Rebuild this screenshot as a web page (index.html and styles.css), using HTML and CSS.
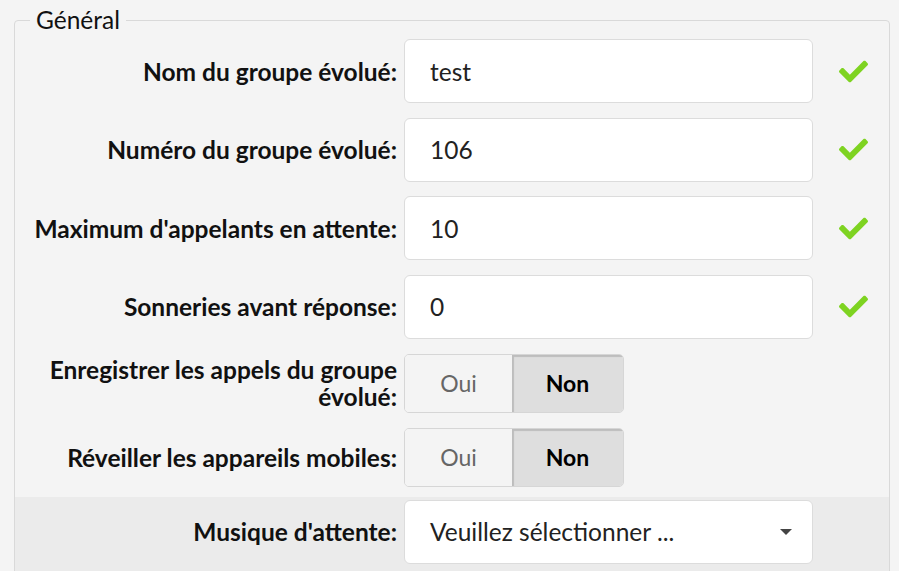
FILE: index.html
```html
<!DOCTYPE html>
<html lang="fr">
<head>
  <meta charset="UTF-8">
  <meta name="viewport" content="width=device-width, initial-scale=1.0">
  <title>Groupe évolué</title>
  <link rel="stylesheet" href="styles.css">
</head>
<body>
  <!-- Paramètres généraux du groupe -->
  <fieldset class="panel">
    <legend>Général</legend>

    <div class="row">
      <label class="row-label" for="nom">Nom du groupe évolué:</label>
      <input class="field" id="nom" type="text" value="test">
      <span class="ok">
        <svg viewBox="0 0 512 512"><path d="M173.9 439.4l-166.4-166.4c-10-10-10-26.2 0-36.2l36.2-36.2c10-10 26.2-10 36.2 0L192 312.7 432.1 72.6c10-10 26.2-10 36.2 0l36.2 36.2c10 10 10 26.2 0 36.2l-294.4 294.4c-10 10-26.2 10-36.2 0z"/></svg>
      </span>
    </div>

    <div class="row">
      <label class="row-label" for="numero">Numéro du groupe évolué:</label>
      <input class="field" id="numero" type="text" value="106">
      <span class="ok">
        <svg viewBox="0 0 512 512"><path d="M173.9 439.4l-166.4-166.4c-10-10-10-26.2 0-36.2l36.2-36.2c10-10 26.2-10 36.2 0L192 312.7 432.1 72.6c10-10 26.2-10 36.2 0l36.2 36.2c10 10 10 26.2 0 36.2l-294.4 294.4c-10 10-26.2 10-36.2 0z"/></svg>
      </span>
    </div>

    <div class="row">
      <label class="row-label" for="max">Maximum d'appelants en attente:</label>
      <input class="field" id="max" type="text" value="10">
      <span class="ok">
        <svg viewBox="0 0 512 512"><path d="M173.9 439.4l-166.4-166.4c-10-10-10-26.2 0-36.2l36.2-36.2c10-10 26.2-10 36.2 0L192 312.7 432.1 72.6c10-10 26.2-10 36.2 0l36.2 36.2c10 10 10 26.2 0 36.2l-294.4 294.4c-10 10-26.2 10-36.2 0z"/></svg>
      </span>
    </div>

    <div class="row">
      <label class="row-label" for="sonneries">Sonneries avant réponse:</label>
      <input class="field" id="sonneries" type="text" value="0">
      <span class="ok">
        <svg viewBox="0 0 512 512"><path d="M173.9 439.4l-166.4-166.4c-10-10-10-26.2 0-36.2l36.2-36.2c10-10 26.2-10 36.2 0L192 312.7 432.1 72.6c10-10 26.2-10 36.2 0l36.2 36.2c10 10 10 26.2 0 36.2l-294.4 294.4c-10 10-26.2 10-36.2 0z"/></svg>
      </span>
    </div>

    <div class="row row-toggle">
      <span class="row-label">Enregistrer les appels du groupe évolué:</span>
      <div class="toggle">
        <button class="toggle-btn">Oui</button>
        <button class="toggle-btn active">Non</button>
      </div>
    </div>

    <div class="row row-toggle">
      <span class="row-label">Réveiller les appareils mobiles:</span>
      <div class="toggle">
        <button class="toggle-btn">Oui</button>
        <button class="toggle-btn active">Non</button>
      </div>
    </div>

    <!-- Ligne surlignée -->
    <div class="row row-hover">
      <label class="row-label" for="musique">Musique d'attente:</label>
      <div class="field select" id="musique">
        <span>Veuillez sélectionner ...</span>
        <span class="caret"></span>
      </div>
    </div>
  </fieldset>
</body>
</html>
```

FILE: styles.css
```css
body {
  margin: 0;
  padding: 6px 9px 0 14px;
  background-color: #f4f4f4;
  font-family: Lato, "Open Sans", sans-serif;
  color: #111;
  overflow: hidden;
  height: 571px;
  box-sizing: border-box;
}

.panel {
  margin: 0;
  padding: 5px 0 20px 0;
  border: 1px solid #d9d9d9;
  border-radius: 4px;
  min-height: 600px;
}

.panel legend {
  margin-left: 15px;
  padding: 0 6px;
  font-size: 24.5px;
  line-height: 28px;
  color: #111;
}

.row {
  display: flex;
  align-items: center;
  padding-bottom: 14.67px;
}

.row-label {
  width: 374px;
  padding-left: 8px;
  margin-right: 7px;
  text-align: right;
  font-weight: bold;
  font-size: 24.5px;
  line-height: 27px;
}

.field {
  box-sizing: border-box;
  width: 409px;
  height: 64px;
  padding: 0 25px;
  border: 1px solid #dcdcdc;
  border-radius: 6px;
  background: #fff;
  font-family: inherit;
  font-size: 24.5px;
  color: #222;
  outline: none;
}

.ok {
  margin-left: 26px;
  width: 29px;
  height: 29px;
  display: flex;
  align-items: center;
}

.ok svg {
  width: 29px;
  height: 29px;
  fill: #7ed321;
}

/* Boutons Oui / Non */
.row-toggle {
  padding-bottom: 15px;
}

.toggle {
  display: flex;
  height: 59px;
  border: 1px solid #d6d6d6;
  border-radius: 5px;
  overflow: hidden;
  box-sizing: border-box;
}

.toggle-btn {
  border: none;
  margin: 0;
  width: 107px;
  background: #f4f4f4;
  font-family: inherit;
  font-size: 23px;
  color: #666;
}

.toggle-btn.active {
  width: 111px;
  background: #dedede;
  color: #000;
  font-weight: bold;
  box-shadow: inset 2px 2px 1px #bdbdbd;
}

.row-hover {
  margin-top: -5px;
  padding-top: 3px;
  background-color: #ebebeb;
}

.select {
  display: flex;
  align-items: center;
  justify-content: space-between;
  padding-right: 20px;
}

.caret {
  width: 0;
  height: 0;
  border-left: 6px solid transparent;
  border-right: 6px solid transparent;
  border-top: 6px solid #444;
}
```
